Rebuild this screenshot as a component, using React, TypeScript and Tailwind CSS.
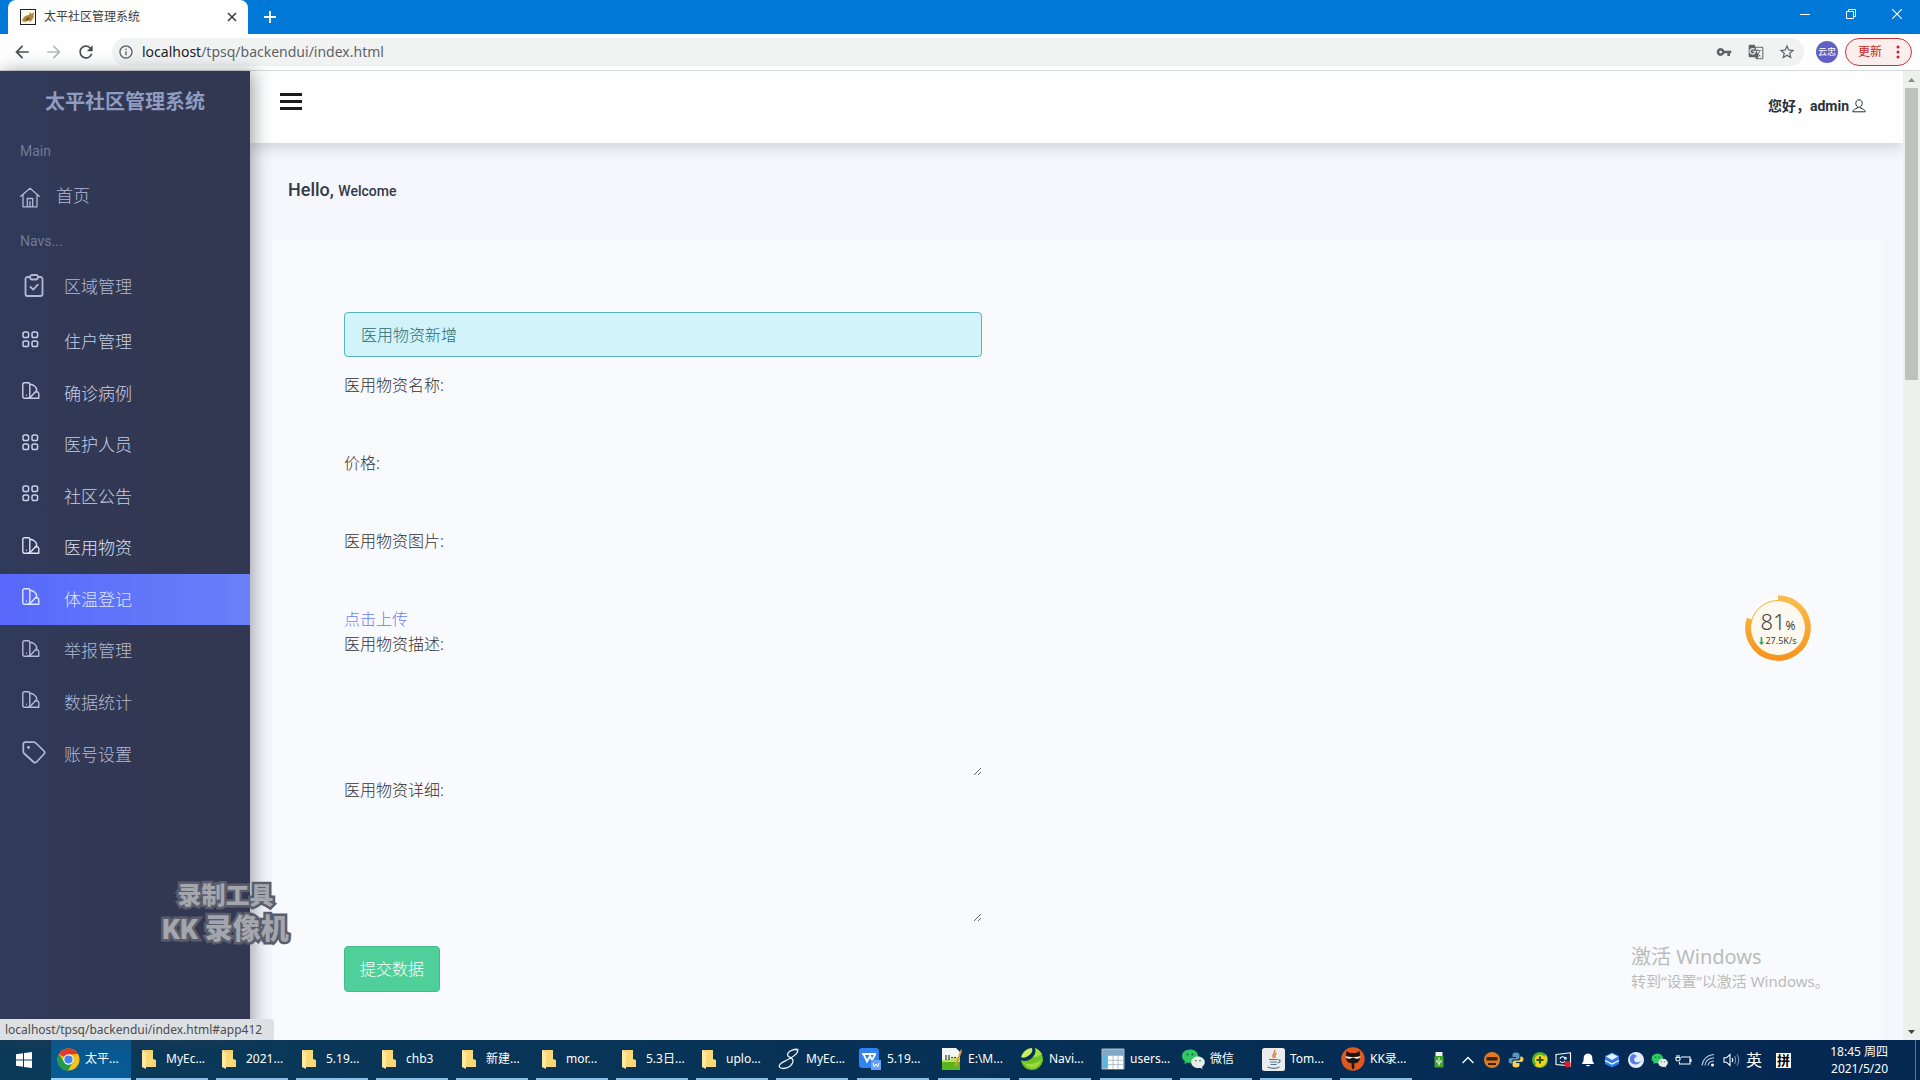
import React from "react";
import { MdVpnKey, MdGTranslate, MdStarBorder, MdRefresh, MdArrowBack, MdArrowForward, MdInfoOutline } from "react-icons/md";

const ui = "font-['Noto_Sans','Noto_Sans_CJK_SC',sans-serif]";

/* ---------- sidebar icons ---------- */

const HouseIcon = () => (
  <svg width="20" height="21" viewBox="0 0 20 21" fill="none" stroke="currentColor" strokeWidth="1.3" strokeLinejoin="round" strokeLinecap="round" aria-hidden="true">
    <path d="M0.8 9.2 10 1.2l9.2 8M3 7.5v12.3h14V7.5M7.3 19.8v-8.3h5.4v8.3M10 14.5v5" />
  </svg>
);

const ClipboardIcon = () => (
  <svg width="20" height="23" viewBox="0 0 20 23" fill="none" stroke="currentColor" strokeWidth="1.8" strokeLinecap="round" strokeLinejoin="round" aria-hidden="true">
    <path d="M6 3H3.5A2 2 0 0 0 1.500 5v15a2 2 0 0 0 2 2h13a2 2 0 0 0 2-2V5a2 2 0 0 0-2-2H14" />
    <rect x="6" y="1" width="8" height="4.500" rx="2.200" />
    <path d="m6.500 13 2.700 2.700 4.600-5" />
  </svg>
);

const GridIcon = () => (
  <svg width="17" height="17" viewBox="0 0 17 17" fill="none" stroke="currentColor" strokeWidth="1.500" aria-hidden="true">
    <rect x="1" y="1" width="5.600" height="5.600" rx="1.800" />
    <rect x="10" y="1" width="5.600" height="5.600" rx="1.800" />
    <rect x="1" y="10" width="5.600" height="5.600" rx="1.800" />
    <rect x="10" y="10" width="5.600" height="5.600" rx="1.800" />
  </svg>
);

const SwatchIcon = () => (
  <svg width="18" height="17" viewBox="0 0 18 17" fill="none" stroke="currentColor" strokeWidth="1.400" strokeLinejoin="round" aria-hidden="true">
    <rect x="0.800" y="0.800" width="7" height="15.400" rx="1.500" />
    <path d="M7.800 2.200c3.500 0 6.700 2.800 7 6L8 15.800" />
    <path d="M13.200 10H16l.8 1.500v4.700H5" />
    <path d="M4 13.200h.9" />
  </svg>
);

const TagIcon = () => (
  <svg width="24" height="23" viewBox="0 0 24 23" fill="none" stroke="currentColor" strokeWidth="1.700" strokeLinejoin="round" aria-hidden="true">
    <path d="M3.500 1.200h8.300c.8 0 1.500.3 2 .8l8.200 8c.9.9.9 2.100 0 3l-7.500 8c-.8.900-2 .9-3 0L2.200 12.500c-.6-.6-.9-1.300-.9-2.100V3.500c0-1.300.9-2.300 2.200-2.300Z" />
    <circle cx="6.500" cy="6.500" r="0.600" fill="currentColor" />
  </svg>
);

const UserIcon = () => (
  <svg width="14" height="14" viewBox="0 0 14 14" fill="none" stroke="currentColor" strokeWidth="1" aria-hidden="true">
    <path d="M7 .8c2 0 3.200 1.500 3.200 3.600S8.800 8.300 7 8.300 3.800 6.500 3.800 4.400 5 .8 7 .8Z" />
    <path d="M5.300 8v1.200C3 9.800 1 10.600.8 12.800h12.400c-.2-2.200-2.200-3-4.500-3.600V8" />
  </svg>
);

/* ---------- taskbar icons ---------- */

const Folder = () => (
  <svg width="16" height="20" viewBox="0 0 16 20" aria-hidden="true">
    <path d="M1 1h11v17H1z" fill="#f0c75c" />
    <path d="M1 1l4 2v17l-4-2z" fill="#fde9a4" />
    <path d="M12 1v9l3 1v7H5V3l-1-2z" fill="#f9d976" />
  </svg>
);

const ChromeLogo = () => (
  <svg width="23" height="23" viewBox="0 0 24 24" aria-hidden="true">
    <circle cx="12" cy="12" r="11.500" fill="#fbc116" />
    <path d="M12 12 2 6.300A11.500 11.500 0 0 1 22 6.300L12 6.800Z" fill="#e33b2e" />
    <path d="M2 6.300A11.500 11.500 0 0 0 11.500 23.500l5-8.700L12 12 7.500 14.600Z" fill="#229a4a" />
    <circle cx="12" cy="12" r="5.400" fill="#fff" />
    <circle cx="12" cy="12" r="4.300" fill="#4384f3" />
  </svg>
);

const CurlIcon = () => (
  <svg width="22" height="22" viewBox="0 0 22 22" fill="none" stroke="#e6eef6" strokeWidth="1.300" aria-hidden="true">
    <path d="M20.500 1.500C17 .5 9.500 3 9.500 7c0 2.500 5.500 2 5.500 6 0 4-5 7.500-9.500 7.500-3 0-5-1.500-4-3.500S6 13.500 9 12s9-5 10.500-8c.7-1.600-.5-2.500-2-2.200" />
  </svg>
);

const WpsIcon = () => (
  <svg width="22" height="22" viewBox="0 0 22 22" aria-hidden="true">
    <rect width="20" height="20" rx="3" fill="#2f82f0" />
    <path d="M3 6h14M4.500 6l3.500 7.500L11 8l2 4 3.500-6" fill="none" stroke="#fff" strokeWidth="1.800" />
    <rect x="12" y="12" width="10" height="10" fill="#6aa0f5" />
    <path d="m14 15 1.300 4L17 16l1.700 3 1.300-4" fill="none" stroke="#fff" strokeWidth="1" />
  </svg>
);

const EditorIcon = () => (
  <svg width="23" height="24" viewBox="0 0 23 24" aria-hidden="true">
    <path d="M2 1h14l4 4v18H2z" fill="#f4f7f0" />
    <path d="M2 15l18-3v11H2z" fill="#58b51f" />
    <path d="M2 13l18-3v5H2z" fill="#b8e35a" />
    <path d="M6 8v5M9 8v5M11 10.500h2M14 10.500h2" stroke="#333" strokeWidth="1.200" />
    <path d="M21 2 15 17l-1 3 3-2 5-14z" fill="#e59a3c" />
  </svg>
);

const NavicatIcon = () => (
  <svg width="24" height="24" viewBox="0 0 24 24" aria-hidden="true">
    <path d="M1 10C3 4 8 1 12 1c1 4-1 6-4 8s-5 2-7 1Z" fill="#c8ef5c" />
    <path d="M15 1c1.500 3 .5 7-3 10s-7 4-11 2c1 6 5 10 11 10s11-5 11-11c0-5-4-9-8-11Z" fill="#6fc326" />
    <path d="M15 1c1.500 3 .5 6-2 9 4 0 7-1 9-3-2-3-4-5-7-6Z" fill="#a7e045" />
    <path d="M4 16c5 2 11 1 17-3-1 5-5 8-9 8-3 0-6-2-8-5Z" fill="#9bdc3a" />
  </svg>
);

const TableIcon = () => (
  <svg width="24" height="22" viewBox="0 0 24 22" aria-hidden="true">
    <rect x="0.500" y="0.500" width="23" height="21" rx="1" fill="#a7b8c4" />
    <rect x="1.500" y="2" width="21" height="5" fill="#7fa9c6" />
    <rect x="1.500" y="7" width="5" height="13" fill="#59b6dc" />
    <path d="M7 8h15v13H7z" fill="#fff" />
    <path d="M12 8v13M17 8v13M7 12.300h15M7 16.600h15" stroke="#9fb0bb" strokeWidth="0.800" />
  </svg>
);

const WeChat = ({ size }: { size: number }) => (
  <svg width={size} height={size} viewBox="0 0 24 24" aria-hidden="true">
    <path d="M9 2.500C4.500 2.500 1 5.300 1 9c0 2.200 1.200 4 3 5.200L3.400 17l3-1.500c.8.200 1.700.3 2.600.3 4.500 0 8-3 8-6.800S13.500 2.500 9 2.500Z" fill="#2fcb62" />
    <path d="M17 9.500c-3.800 0-6.800 2.500-6.800 5.700S13.200 21 17 21c.7 0 1.400-.1 2-.3l2.600 1.300-.6-2.300c1.700-1 2.800-2.600 2.800-4.500 0-3.200-3-5.700-6.800-5.700Z" fill="#e9eeea" />
    <g fill="#14683a"><circle cx="6.500" cy="7.500" r="1" /><circle cx="11.500" cy="7.500" r="1" /><circle cx="14.800" cy="13.800" r="0.800" /><circle cx="19" cy="13.800" r="0.800" /></g>
  </svg>
);

const JavaIcon = () => (
  <svg width="23" height="23" viewBox="0 0 23 23" aria-hidden="true">
    <rect width="23" height="23" rx="2.500" fill="#ebecee" />
    <path d="M12.500 2c2 2.500-3.500 4-1 8M14.500 5c-2.500 1.500-2 3-1.500 5" fill="none" stroke="#e0722c" strokeWidth="1.300" />
    <path d="M7 11.500h9M8 14h7M8.500 16.500h6M16.500 12c2.500-.5 2 2.500-1 3M5.500 19c4 1.500 9 1.500 12 0" fill="none" stroke="#4d7896" strokeWidth="1.200" />
  </svg>
);

const KKIcon = () => (
  <svg width="24" height="24" viewBox="0 0 24 24" aria-hidden="true">
    <circle cx="12" cy="12" r="11.700" fill="#e2581c" />
    <path d="M5.500 4 9 6h6l3.500-2 .5 5c.5 5-2.500 7.500-7 7.500S4.500 14 5 9z" fill="#1d1513" />
    <path d="M4.500 9c4 1.500 11 1.500 15 0 0 2.500-3 3.500-5.500 2.200a6 6 0 0 0-4 0C7.500 12.500 4.500 11.500 4.500 9Z" fill="#f3e7df" />
    <path d="m12 15 1.500 3-.5 4h-2l-.5-4z" fill="#1d1513" />
  </svg>
);

/* ---------- tray icons ---------- */

const tray: React.ReactNode[] = [
  <svg width="12" height="8" viewBox="0 0 12 8" fill="none" stroke="#fff" strokeWidth="1.300"><path d="m.6 7 5.400-5.500L11.400 7" /></svg>,
  <svg width="16" height="16" viewBox="0 0 16 16"><circle cx="8" cy="8" r="8" fill="#e07a1f" /><path d="M2.500 5h11v3.500h-11zM4 11h8v2H4z" fill="#3b2413" /></svg>,
  <svg width="16" height="16" viewBox="0 0 16 16"><path d="M8 .5c-3 0-3.500 1-3.500 2.500V5H8v1H3C1 6 .5 7.500.5 9s1 2.500 2.500 2.500h1V9.500C4 8 5 7.500 6.500 7.500h3c1.300 0 2-1 2-2V3C11.500 1.500 10.500.5 8 .5Z" fill="#5f93bd" /><path d="M8 15.500c3 0 3.500-1 3.500-2.500v-2H8v-1h5c2 0 2.500-1.500 2.500-3S14.500 4.500 13 4.500h-.7v2c0 1.500-1 2-2.300 2H7c-1.500 0-2.500.8-2.500 2V13c0 1.500 1 2.500 3.500 2.500Z" fill="#f6cf4d" /></svg>,
  <svg width="16" height="16" viewBox="0 0 16 16"><circle cx="8" cy="8" r="8" fill="#4cae2c" /><path d="M13.500 2.300A8 8 0 0 1 3 14c1-3 3-4 5-4s4-4 5.500-7.700Z" fill="#f2d21f" /><circle cx="8" cy="8" r="5.500" fill="#f2d21f" /><path d="M8 4.500v7M4.500 8h7" stroke="#1d5c14" strokeWidth="2" /></svg>,
  <svg width="17" height="16" viewBox="0 0 17 16" fill="none" stroke="#fff" strokeWidth="1.100"><path d="M1 2.500 15.500.8v13L1 12.500zM5 7c.5-3 5-3 5.500 0M11 5v2H9M10 9c-1 2-4 2-5 0" /><circle cx="12.500" cy="12.200" r="3.200" fill="#d81f2a" stroke="none" /></svg>,
  <svg width="14" height="14" viewBox="0 0 14 14" fill="#fff"><path d="M7 .5c-3 0-4.300 2.200-4.300 4.500 0 3-.7 4.500-2 6h12.600c-1.300-1.500-2-3-2-6C11.300 2.700 10 .5 7 .5ZM5 12h4c-.3 1.700-3.700 1.700-4 0Z" /></svg>,
  <svg width="16" height="16" viewBox="0 0 16 16"><path d="m8 .5 7 3.500v8l-7 3.500L1 12V4z" fill="#2c7fe6" /><path d="m8 1.500 6 3-6 3.500-6-3.500z" fill="#e5f1ff" /><path d="m1 8.500 7 3.500 7-3.500" stroke="#fff" fill="none" strokeWidth="1.300" /></svg>,
  <svg width="16" height="16" viewBox="0 0 16 16"><circle cx="8" cy="8" r="8" fill="#e4ecfa" /><path d="M4 2.500c-3 2-3 7 0 9s8 1 9-3c-1.500 2-4.500 2.500-6 1S6 5 9 4.500c-1-1.500-3-2.500-5-2Z" fill="#4a86e8" /><path d="M5 4c-1.500 2-1.500 5 0 6.500" stroke="#7c6be0" fill="none" strokeWidth="1.500" /></svg>,
  <WeChat size={17} />,
  <svg width="17" height="12" viewBox="0 0 17 12" fill="none" stroke="#fff" strokeWidth="1.100"><path d="M6 3h9v7H4.500V8M16 5v3M1 3.500h4v2c0 2-4 2-4 0zM2 1v2M4 1v2" /></svg>,
  <svg width="14" height="14" viewBox="0 0 14 14" fill="none" stroke="#c3d1e2" strokeWidth="1.100"><path d="M1 12.500C2 6 6.500 2 13 1.500M4 12.500C4.500 8 8 5 13 4.700M7 12.500c.3-2.500 2.500-4.300 6-4.500" /><circle cx="11.500" cy="12" r="1.500" fill="#fff" stroke="none" /></svg>,
  <svg width="17" height="14" viewBox="0 0 17 14" fill="none" stroke="#fff" strokeWidth="1.100"><path d="M1 4.800h2.500L7 1.500v11L3.500 9.200H1zM9 5c.8 1 .8 3 0 4" /><path d="M11.500 3.200c1.500 2 1.500 5.600 0 7.600M14 1.500c2.300 3 2.300 8 0 11" stroke="#7c93b0" /></svg>,
];

const folders = ["MyEc...", "2021...", "5.19...", "chb3", "新建...", "mor...", "5.3日...", "uplo..."];
const appsA: [React.ReactNode, string][] = [
  [<CurlIcon />, "MyEc..."],
  [<WpsIcon />, "5.19..."],
  [<EditorIcon />, "E:\\M..."],
  [<NavicatIcon />, "Navi..."],
];
const appsB: [React.ReactNode, string][] = [
  [<TableIcon />, "users..."],
  [<WeChat size={24} />, "微信"],
  [<JavaIcon />, "Tom..."],
  [<KKIcon />, "KK录..."],
];

function Task({ icon, label }: { icon: React.ReactNode; label: string }) {
  return (
    <button type="button" className="flex h-10 w-[72px] shrink-0 items-center gap-[5px] overflow-hidden border-b-2 border-[#8cbfe6] pl-px">
      <span className="flex w-6 shrink-0 justify-center">{icon}</span>
      <span className="whitespace-nowrap">{label}</span>
    </button>
  );
}

/* ---------- browser chrome ---------- */

function TabStrip() {
  return (
    <div className="flex h-[34px] shrink-0 items-stretch bg-[#0078d7]">
      <div className="ml-2 flex w-60 items-center rounded-t-lg bg-[#fdfefd] pl-3 pr-[11px]">
        <svg width="16" height="16" viewBox="0 0 16 16" aria-hidden="true">
          <rect x="0.500" y="0.500" width="15" height="15" fill="#fbf8ee" stroke="#222" />
          <path d="M2 12c1-4 4-6 7-6l1-3 1.500 2L14 3l-.5 5c0 2-2 3-3 5l-2-2-3 2z" fill="#b08a3c" />
          <path d="m5 11 3-3 2 1-2 3z" fill="#6d5a2b" />
        </svg>
        <span className="ml-2 flex-1 text-xs text-[#3c4043]">太平社区管理系统</span>
        <button type="button" aria-label="关闭标签页">
          <svg width="10" height="10" viewBox="0 0 10 10" stroke="#3c4043" strokeWidth="1.600"><path d="m1 1 8 8M9 1 1 9" /></svg>
        </button>
      </div>
      <button type="button" aria-label="新标签页" className="ml-4 flex items-center">
        <svg width="12" height="12" viewBox="0 0 12 12" stroke="#fff" strokeWidth="1.800"><path d="M6 0v12M0 6h12" /></svg>
      </button>
      <div className="ml-auto flex pb-[6px]">
        <button type="button" aria-label="最小化" className="flex w-[46px] items-center justify-center">
          <svg width="10" height="10" viewBox="0 0 10 10" stroke="#fff"><path d="M0 5.500h10" /></svg>
        </button>
        <button type="button" aria-label="还原" className="flex w-[46px] items-center justify-center">
          <svg width="10" height="10" viewBox="0 0 10 10" fill="none" stroke="#fff"><path d="M.5 2.500h7v7h-7zM2.500 2.500v-2h7v7h-2" /></svg>
        </button>
        <button type="button" aria-label="关闭" className="flex w-[46px] items-center justify-center">
          <svg width="10" height="10" viewBox="0 0 10 10" stroke="#fff" strokeWidth="1.100"><path d="m0 0 10 10M10 0 0 10" /></svg>
        </button>
      </div>
    </div>
  );
}

function Toolbar() {
  return (
    <div className="flex h-[37px] shrink-0 items-center border-b border-[#d5d9da] bg-[#fdfefd] pl-3 pr-2 text-[#5f6368]">
      <button type="button" aria-label="后退" className="text-[#4a4d51]"><MdArrowBack size={20} /></button>
      <button type="button" aria-label="前进" className="ml-3 text-[#b6b8ba]"><MdArrowForward size={20} /></button>
      <button type="button" aria-label="重新加载" className="ml-3 text-[#4a4d51]"><MdRefresh size={20} /></button>
      <div className="ml-4 mr-3 flex h-7 flex-1 items-center rounded-full bg-[#f1f3f3] pl-[6px] pr-2">
        <MdInfoOutline size={16} />
        <span className="ml-2 flex-1 text-sm">
          <span className="text-[#202124]">localhost</span>/tpsq/backendui/index.html
        </span>
        <button type="button" aria-label="密码"><MdVpnKey size={16} /></button>
        <button type="button" aria-label="翻译" className="ml-4"><MdGTranslate size={16} /></button>
        <button type="button" aria-label="收藏" className="ml-[14px]"><MdStarBorder size={18} /></button>
      </div>
      <button type="button" className="flex size-[22px] items-center justify-center rounded-full bg-[#5f5fc4] text-[9px] text-white">云忠</button>
      <button type="button" className="ml-[7px] flex h-7 w-[67px] items-center rounded-full border border-[#c5333a] bg-[#fceeec] pl-3 text-xs text-[#c5221f]">
        更新
        <svg className="ml-[14px]" width="4" height="14" viewBox="0 0 4 14" fill="#c5221f"><circle cx="2" cy="2" r="1.500" /><circle cx="2" cy="7" r="1.500" /><circle cx="2" cy="12" r="1.500" /></svg>
      </button>
    </div>
  );
}

/* ---------- page ---------- */

const navs: [string, React.ReactNode, string][] = [
  ["住户管理", <GridIcon />, "text-[#c9cfe6]"],
  ["确诊病例", <SwatchIcon />, "text-[#c9cfe6]"],
  ["医护人员", <GridIcon />, "text-[#c9cfe6]"],
  ["社区公告", <GridIcon />, "text-[#c9cfe6]"],
  ["医用物资", <SwatchIcon />, "text-[#dde1f2]"],
  ["体温登记", <SwatchIcon />, "bg-linear-to-r from-[#5768fb] to-[#6a80f8] text-[#dfe6ff]"],
  ["举报管理", <SwatchIcon />, "text-[#b3b9d4]"],
  ["数据统计", <SwatchIcon />, "text-[#b3b9d4]"],
];

function Sidebar() {
  return (
    <nav className="z-20 w-[250px] shrink-0 overflow-hidden bg-linear-to-r from-[#303a5a] via-[#323853] to-[#323752] text-[17px] font-light leading-normal text-[#b3b9d4] shadow-[4px_0_16px_rgba(60,64,80,0.45)]">
      <h1 className="flex h-[61px] items-center pl-[45px] text-xl font-bold text-[#8f9cc0]">太平社区管理系统</h1>
      <p className="flex h-[38px] items-center pl-5 font-['Roboto'] text-sm font-normal text-[#6f7997]">Main</p>
      <a href="#home" className="flex h-[54px] items-center gap-4 pl-5">
        <HouseIcon />
        <span className="pb-[2px]">首页</span>
      </a>
      <p className="flex h-[34px] items-center pl-5 font-['Roboto'] text-sm font-normal text-[#6f7997]">Navs...</p>
      <a href="#area" className="flex h-[58px] items-center pl-6">
        <span className="w-10 pb-1"><ClipboardIcon /></span>
        区域管理
      </a>
      {navs.map(([label, icon, tone]) => (
        <a key={label} href="#app412" className={`flex items-center py-[13px] pl-[22px] ${tone}`}>
          <span className="w-[42px] pb-[5px]">{icon}</span>
          {label}
        </a>
      ))}
      <a href="#account" className="flex h-[53px] items-center pl-[22px]">
        <span className="w-[42px] pb-1"><TagIcon /></span>
        账号设置
      </a>
    </nav>
  );
}

function Field({ id, label }: { id: string; label: string }) {
  return (
    <div className="mb-4">
      <label htmlFor={id} className="block">{label}</label>
      <input id={id} type="text" className="block h-[38px] w-full rounded bg-transparent px-3 outline-none" />
    </div>
  );
}

function Area({ id, label }: { id: string; label: string }) {
  return (
    <div className="mb-[2px]">
      <label htmlFor={id} className="block">{label}</label>
      <textarea id={id} className="block h-[120px] w-full resize rounded bg-transparent px-3 py-2 outline-none" />
    </div>
  );
}

function SpeedBall() {
  return (
    <div className="absolute right-[109px] top-[524px] flex size-[66px] flex-col items-center justify-center text-[#444]">
      <svg className="absolute inset-0" width="66" height="66" viewBox="0 0 66 66" aria-hidden="true">
        <defs>
          <linearGradient id="ring" x1="0" y1="0" x2="0" y2="1">
            <stop offset="0" stopColor="#f9bd4c" />
            <stop offset="1" stopColor="#f7941d" />
          </linearGradient>
        </defs>
        <circle cx="33" cy="33" r="31" fill="#fff" />
        <circle cx="33" cy="33" r="27.500" fill="#fdf9ef" stroke="#f3a93c" strokeWidth="1" />
        <path d="M33 3a30 30 0 1 1-28.500 20.700" fill="none" stroke="url(#ring)" strokeWidth="5.600" />
      </svg>
      <div className="relative flex items-baseline leading-6">
        <span className="text-[22px] font-light">81</span>
        <span className="text-xs">%</span>
      </div>
      <div className="relative flex items-center gap-px text-[9px] leading-[14px]">
        <svg width="5" height="8" viewBox="0 0 5 8" aria-hidden="true"><path d="M1.700 0h1.600v5H5L2.500 8 0 5h1.700z" fill="#1fa556" /></svg>
        27.5K/s
      </div>
    </div>
  );
}

export default function App() {
  return (
    <div className={`flex h-screen flex-col overflow-hidden bg-[#f6f7fc] ${ui}`}>
      <TabStrip />
      <Toolbar />

      <div className="relative flex min-h-0 flex-1">
        <Sidebar />

        <main className="flex min-w-0 flex-1 flex-col overflow-hidden text-[#333]">
          <header className="z-10 flex h-[72px] shrink-0 items-center justify-between bg-[#fdfefd] pl-[30px] pr-[37px] shadow-[0_4px_14px_rgba(60,64,80,0.22)]">
            <button type="button" aria-label="菜单" className="pb-3">
              <svg width="22" height="17" viewBox="0 0 22 17" fill="#1b1b1d"><path d="M0 0h22v3H0zM0 7h22v3H0zM0 14h22v3H0z" /></svg>
            </button>
            <a href="#user" className="flex items-center gap-[3px] pb-[3px] font-['Roboto','Noto_Sans_CJK_SC',sans-serif] text-sm font-bold text-[#2b2f38]">
              您好，admin <UserIcon />
            </a>
          </header>

          <h2 className="mb-[38px] ml-[38px] mt-[35px] font-['Roboto'] text-lg font-medium leading-6 text-[#333a48]">
            Hello, <small className="text-sm">Welcome</small>
          </h2>

          <section className="mx-[22px] flex-1 bg-[#f9fafe] px-[72px] pt-[72px]">
            <form className="w-full max-w-[638px] text-base font-light leading-6">
              <div role="alert" className="mb-4 flex h-[45px] items-center rounded border border-[#58b3bd] bg-[#d1f4fb] px-4 text-[#2c6a75]">
                医用物资新增
              </div>
              <Field id="name" label="医用物资名称:" />
              <Field id="price" label="价格:" />
              <Field id="image" label="医用物资图片:" />
              <a href="#upload" className="mb-px block w-fit text-[#6b7cf0]">点击上传</a>
              <Area id="summary" label="医用物资描述:" />
              <Area id="detail" label="医用物资详细:" />
              <button type="button" className="mt-[22px] h-[46px] w-24 rounded border border-[#47b98a] bg-[#4fd09a] text-white">提交数据</button>
            </form>
          </section>
        </main>

        <div className="flex w-[17px] shrink-0 flex-col items-center bg-[#eef0ed]" aria-hidden="true">
          <span className="flex h-[17px] items-center"><svg width="7" height="4" viewBox="0 0 7 4" fill="#8a8c8a"><path d="M3.500 0 7 4H0z" /></svg></span>
          <span className="h-[292px] w-[13px] bg-[#bfc1be]" />
          <span className="mt-auto flex h-[17px] items-center"><svg width="7" height="4" viewBox="0 0 7 4" fill="#444"><path d="M3.500 4 7 0H0z" /></svg></span>
        </div>

        <SpeedBall />

        <div className="pointer-events-none absolute bottom-[49px] right-[93px] w-[196px] whitespace-nowrap text-[#b9bcb9]">
          <p className="text-xl leading-7">激活 Windows</p>
          <p className="text-[15px] leading-5">转到“设置”以激活 Windows。</p>
        </div>

        <div className="pointer-events-none absolute bottom-[92px] left-[162px] z-30 whitespace-nowrap text-center font-['Roboto','Noto_Sans_CJK_SC',sans-serif] font-black text-[#a4a6ae] [-webkit-text-stroke:5px_#5a5d6b] [paint-order:stroke]">
          <p className="text-2xl leading-8">录制工具</p>
          <p className="text-[28px] leading-9">KK 录像机</p>
        </div>

        <div className="absolute bottom-0 left-0 z-30 flex h-[21px] w-[274px] items-center whitespace-nowrap rounded-tr bg-[#dee1e3] pl-[5px] text-xs text-[#4a4d51]">
          localhost/tpsq/backendui/index.html#app412
        </div>
      </div>

      <footer className="flex h-10 shrink-0 items-center bg-linear-to-r from-[#0b3a59] to-[#042752] text-xs text-white">
        <button type="button" aria-label="开始" className="flex w-[51px] justify-center pr-[3px]">
          <svg width="16" height="16" viewBox="0 0 16 16" fill="#fff"><path d="M0 2.300 7 1.300v6.200H0zM8 1.100 16 0v7.500H8zM0 8.500h7v6.200l-7-1zM8 8.500h8V16l-8-1.100z" /></svg>
        </button>
        <button type="button" className="flex h-10 w-20 items-center gap-[5px] border-b-2 border-[#9bd0f5] bg-[#075a94] pl-[6px]">
          <ChromeLogo />
          太平...
        </button>
        <div className="ml-[5px] flex gap-2">
          {folders.map((f) => <Task key={f} icon={<Folder />} label={f} />)}
        </div>
        <div className="ml-2 flex gap-[9px]">
          {appsA.map(([icon, label]) => <Task key={label} icon={icon} label={label} />)}
        </div>
        <div className="ml-[9px] flex gap-2">
          {appsB.map(([icon, label]) => <Task key={label} icon={icon} label={label} />)}
        </div>

        <div className="ml-auto flex h-full items-center">
          <svg width="10" height="16" viewBox="0 0 10 16" className="mr-3" aria-hidden="true">
            <rect x="1.500" y="0" width="7" height="4" fill="#eef2ee" />
            <rect x="0.500" y="4" width="9" height="11.500" rx="1" fill="#3fa52b" />
            <path d="M5 5.500v8M2.800 8v2L5 11.500 7.200 10V8" stroke="#fff" fill="none" />
          </svg>
          {tray.map((icon, i) => (
            <span key={i} className="flex w-6 justify-center">{icon}</span>
          ))}
          <span className="ml-[2px] text-base leading-6">英</span>
          <span className="ml-[14px] flex size-[15px] items-center justify-center bg-white text-[13px] font-bold leading-none text-black">拼</span>
          <div className="ml-9 w-16 pr-[3px] text-right leading-[17px]">
            <p>18:45 周四</p>
            <p>2021/5/20</p>
          </div>
          <span className="ml-6 mr-1 h-full w-px bg-[#5c7896]" />
        </div>
      </footer>
    </div>
  );
}
